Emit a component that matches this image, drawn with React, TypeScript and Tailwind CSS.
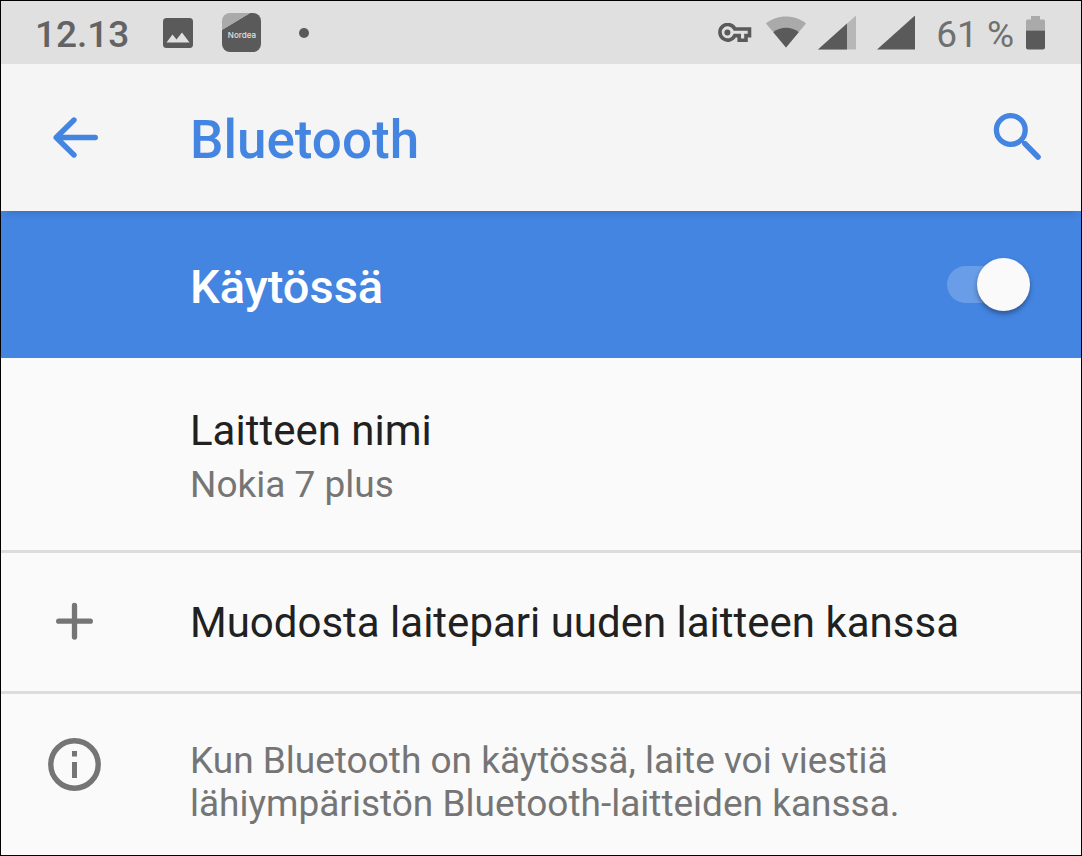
import { useState } from 'react'
import type { ReactNode } from 'react'
import { clsx } from 'clsx'

function ArrowBackIcon() {
  return (
    <svg width="53" height="53" viewBox="0 0 53 53" fill="none" aria-hidden="true">
      <path
        d="M26 9 L8.2 26.5 L26 44 M8.2 26.5 H47.3"
        stroke="currentColor"
        strokeWidth="5.4"
        strokeLinecap="round"
        strokeLinejoin="round"
      />
    </svg>
  )
}

function SearchIcon() {
  return (
    <svg width="53" height="53" viewBox="0 0 53 53" fill="none" stroke="currentColor" aria-hidden="true">
      <circle cx="19.8" cy="19" r="14.4" strokeWidth="5.3" />
      <path d="M34 32.8 L47 46" strokeWidth="5.6" strokeLinecap="round" />
      <path d="M30 29.2 L34 33" strokeWidth="3" />
    </svg>
  )
}

function PlusIcon() {
  return (
    <svg width="53" height="53" viewBox="0 0 53 53" fill="none" aria-hidden="true">
      <path d="M26.5 9.5 V41 M10.7 25.2 H42.3" stroke="currentColor" strokeWidth="5.3" strokeLinecap="round" />
    </svg>
  )
}

function InfoIcon() {
  return (
    <svg width="53" height="53" viewBox="0 0 53 53" fill="currentColor" aria-hidden="true">
      <circle cx="26.5" cy="26.5" r="23.7" fill="none" stroke="currentColor" strokeWidth="5.4" />
      <rect x="24" y="13" width="5" height="5.5" />
      <rect x="24" y="24" width="5" height="16" />
    </svg>
  )
}

function PictureIcon() {
  return (
    <svg width="30" height="30" viewBox="0 0 30 30" aria-hidden="true">
      <rect width="30" height="30" rx="3.5" fill="#5a5a5a" />
      <path d="M3.5 24.5 L9.5 16.5 L13.5 21.5 L19 14.5 L26.5 24.5 Z" fill="#e0e0e0" />
    </svg>
  )
}

function KeyIcon() {
  return (
    <svg width="34" height="20" viewBox="0 0 34 20" fill="none" aria-hidden="true">
      <path
        d="M16.8 6 H31.5 V12.6 H28 V17.3 H21.2 V12.6 H16.8 A7.8 7.8 0 1 1 16.8 6 Z"
        stroke="#5a5a5a"
        strokeWidth="3.6"
        strokeLinejoin="miter"
      />
      <circle cx="9.4" cy="9.4" r="3" fill="#5a5a5a" />
    </svg>
  )
}

function WifiIcon() {
  return (
    <svg width="40" height="34" viewBox="0 0 40 34" aria-hidden="true">
      <path d="M0 7.5 C11 -1.8 29 -1.8 40 7.5 L20 31.5 Z" fill="#aaaaaa" />
      <path d="M7.3 16.3 C14 10.3 26 10.3 32.7 16.3 L20 31.5 Z" fill="#5a5a5a" />
    </svg>
  )
}

function SignalIcon({ partial = false }: { partial?: boolean }) {
  return (
    <svg width="38" height="34" viewBox="0 0 38 34" aria-hidden="true">
      <path d="M0 33.5 L38 -0.5 V33.5 Z" fill={partial ? '#b7b7b7' : '#5a5a5a'} />
      {partial && <path d="M0 33.5 L29 7.6 V33.5 Z" fill="#5a5a5a" />}
    </svg>
  )
}

function BatteryIcon() {
  return (
    <svg width="19" height="34" viewBox="0 0 19 34" aria-hidden="true">
      <path d="M5 0 H14 V3.5 H17.5 Q19 3.5 19 5 V14.5 H0 V5 Q0 3.5 1.5 3.5 H5 Z" fill="#aaaaaa" />
      <path d="M0 14.5 H19 V31.5 Q19 33.5 17 33.5 H2 Q0 33.5 0 31.5 Z" fill="#5a5a5a" />
    </svg>
  )
}

function StatusBar() {
  return (
    <div className="flex h-[63px] items-center justify-between bg-[#e0e0e0] pr-9 pl-[34px] text-[37px] leading-[43px]">
      <div className="flex items-center">
        <span className="pt-1 font-medium text-[#636363]">12.13</span>
        <div className="ml-[34px] flex items-center gap-[29px]">
          <PictureIcon />
          <div className="flex size-[39px] items-center justify-center overflow-hidden rounded-lg bg-[linear-gradient(149deg,#aaaaaa_27%,#5a5a5a_28%)] pt-1">
            <span className="font-[Inter,sans-serif] text-[8px] leading-none font-medium text-[#e0e0e0]">Nordea</span>
          </div>
        </div>
        <span className="ml-[38px] size-[10px] rounded-full bg-[#5a5a5a]" />
      </div>
      <div className="flex items-center">
        <KeyIcon />
        <div className="ml-[14px] flex items-center gap-3">
          <WifiIcon />
          <SignalIcon partial />
        </div>
        <div className="ml-[21px] flex items-center gap-[21px]">
          <SignalIcon />
          <span className="pt-1 text-[#707070]">61 %</span>
        </div>
        <div className="ml-3">
          <BatteryIcon />
        </div>
      </div>
    </div>
  )
}

// Leading icon column, every row's text starts after it
function IconSlot({ children }: { children?: ReactNode }) {
  return <div className="w-[189px] shrink-0 pl-[47px]">{children}</div>
}

export default function App() {
  const [enabled, setEnabled] = useState(true)

  return (
    <div className="flex min-h-screen flex-col border border-black bg-[#fafafa] font-[Roboto,sans-serif] text-[#212121]">
      <StatusBar />

      <header className="relative z-10 flex h-[147px] items-center bg-[#f5f5f5] pr-[37px] text-[#4485e2] shadow-[0_6px_8px_-5px_rgba(0,0,0,0.2)]">
        <IconSlot>
          <button type="button" aria-label="Takaisin" className="block">
            <ArrowBackIcon />
          </button>
        </IconSlot>
        <h1 className="flex-1 pt-1 text-[53px] leading-[62px] font-medium">Bluetooth</h1>
        <button type="button" aria-label="Haku" className="block">
          <SearchIcon />
        </button>
      </header>

      <main>
        <label
          className={clsx(
            'flex h-[147px] cursor-pointer items-center pr-[51px] text-white',
            enabled ? 'bg-[#4485e2]' : 'bg-[#757575]',
          )}
        >
          <IconSlot />
          <span className="flex-1 pt-1 text-[47px] leading-[55px] font-medium">Käytössä</span>
          <span className="relative flex h-[53px] w-[83px] items-center">
            <input
              type="checkbox"
              role="switch"
              checked={enabled}
              onChange={(e) => setEnabled(e.target.checked)}
              className="h-[37px] w-[70px] cursor-pointer appearance-none rounded-full bg-white/20"
            />
            <span
              className={clsx(
                'pointer-events-none absolute top-0 size-[53px] rounded-full bg-[#fafafa] shadow-[0_3px_5px_rgba(0,0,0,0.35)]',
                enabled ? 'right-0' : 'left-0',
              )}
            />
          </span>
        </label>

        <button type="button" className="flex w-full border-b-3 border-[#dcdcdc] pt-12 pb-11 text-left">
          <IconSlot />
          <span className="flex flex-1 flex-col gap-2">
            <span className="text-[42px] leading-[49px]">Laitteen nimi</span>
            <span className="text-[37px] leading-[43px] text-[#757575]">Nokia 7 plus</span>
          </span>
        </button>

        <button type="button" className="flex h-[141px] w-full items-center border-b-3 border-[#dcdcdc] text-left">
          <IconSlot>
            <span className="text-[#757575]">
              <PlusIcon />
            </span>
          </IconSlot>
          <span className="flex-1 text-[42px] leading-[49px]">Muodosta laitepari uuden laitteen kanssa</span>
        </button>

        <section className="flex pt-11 pr-[42px] pb-6 text-[#757575]">
          <IconSlot>
            <InfoIcon />
          </IconSlot>
          <p className="max-w-[760px] flex-1 pt-px text-[37px] leading-[43px]">
            Kun Bluetooth on käytössä, laite voi viestiä lähiympäristön Bluetooth-laitteiden kanssa.
          </p>
        </section>
      </main>
    </div>
  )
}
